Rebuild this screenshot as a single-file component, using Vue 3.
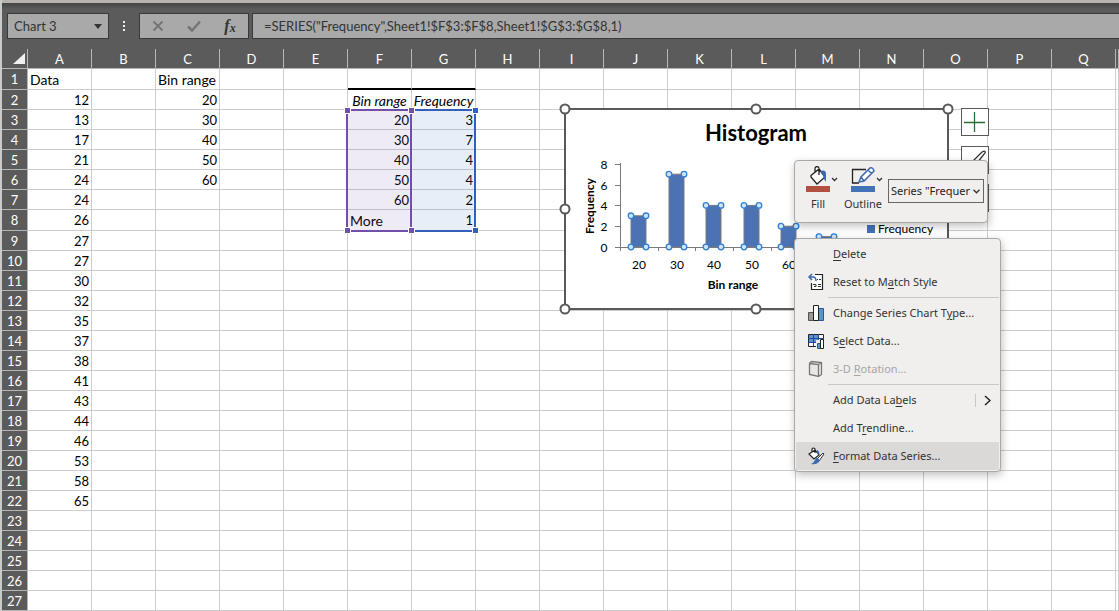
<script setup>
import { ref } from 'vue'

const formula = ref('=SERIES("Frequency",Sheet1!$F$3:$F$8,Sheet1!$G$3:$G$8,1)')
const nameBox = ref('Chart 3')
const columns = 'ABCDEFGHIJKLMNOPQ'.split('')
const data = {
  A: ['Data', 12, 13, 17, 21, 24, 24, 26, 27, 27, 30, 32, 35, 37, 38, 41, 43, 44, 46, 53, 58, 65],
  C: ['Bin range', 20, 30, 40, 50, 60],
  F: ['', 'Bin range', 20, 30, 40, 50, 60, 'More'],
  G: ['', 'Frequency', 3, 7, 4, 4, 2, 1],
}
const rows = Array.from({ length: 27 }, (_, i) => i + 1)
const cell = (c, r) => data[c]?.[r - 1] ?? ''
const cellClass = (c, r) => ({
  text: typeof cell(c, r) === 'string',
  ruled: (c === 'F' || c === 'G') && r === 1,
  heading: (c === 'F' || c === 'G') && r === 2,
})

const base = 144
const unit = 10.4
const bars = [
  { label: '20', value: 3 },
  { label: '30', value: 7 },
  { label: '40', value: 4 },
  { label: '50', value: 4 },
  { label: '60', value: 2 },
  { label: '', value: 1 },
].map((b, i) => ({ ...b, x: 72 + Math.round(i * 37.6), y: base - b.value * unit }))
const yTicks = [0, 2, 4, 6, 8]
const xTicks = Array.from({ length: 7 }, (_, i) => 61 + Math.round(i * 37.7))
const handles = [[6, 6], [197, 6], [389, 6], [6, 106], [389, 106], [6, 206], [197, 206], [389, 206]]

const menu = [
  { parts: ['', 'D', 'elete'] },
  { parts: ['Reset to M', 'a', 'tch Style'], icon: 'reset' },
  { sep: true },
  { parts: ['Change Series Chart T', 'y', 'pe...'], icon: 'chart' },
  { parts: ['S', 'e', 'lect Data...'], icon: 'select' },
  { parts: ['3-D ', 'R', 'otation...'], icon: 'rotate', disabled: true },
  { sep: true },
  { parts: ['Add Data La', 'b', 'els'], more: true },
  { parts: ['Add T', 'r', 'endline...'] },
  { parts: ['', 'F', 'ormat Data Series...'], icon: 'format', active: true },
]
</script>

<template>
  <main class="app">
    <header class="bar">
      <div class="name-box">
        <input v-model="nameBox" aria-label="Name box" />
        <button aria-label="Show names"><svg width="9" height="5"><path d="M0 0h8L4 5z" fill="#333" /></svg></button>
      </div>
      <svg class="grip" width="3" height="12"><path d="M0 0h2v2H0zM0 4h2v2H0zM0 8h2v2H0z" fill="#f0f0f0" /></svg>
      <div class="entry">
        <button aria-label="Cancel"><svg width="12" height="12"><path d="M1.500 1.500l9 9M10.500 1.500l-9 9" stroke="#767676" stroke-width="2" fill="none" /></svg></button>
        <button aria-label="Enter"><svg width="14" height="12"><path d="M1 6.500l4 4L13 1.500" stroke="#767676" stroke-width="2.500" fill="none" /></svg></button>
        <button aria-label="Insert function" class="fx">f<sub>x</sub></button>
      </div>
      <input v-model="formula" class="formula" aria-label="Formula bar" />
    </header>

    <table class="sheet">
      <colgroup>
        <col class="c-head" /><col v-for="c in columns" :key="c" class="c-data" /><col />
      </colgroup>
      <thead>
        <tr>
          <th class="corner"><svg width="12" height="11"><path d="M12 0v11H0z" fill="#f0f0f0" /></svg></th>
          <th v-for="c in columns" :key="c" scope="col">{{ c }}</th>
          <th></th>
        </tr>
      </thead>
      <tbody>
        <tr v-for="r in rows" :key="r" :class="{ tall: r === 1 || r === 8 }">
          <th scope="row">{{ r }}</th>
          <td v-for="c in columns" :key="c" :class="cellClass(c, r)">{{ cell(c, r) }}</td>
          <td></td>
        </tr>
      </tbody>
    </table>

    <svg class="ranges" width="136" height="128">
      <rect x="5" y="5" width="64" height="121" fill="#7048a8" fill-opacity=".11" />
      <rect x="69" y="5" width="64" height="121" fill="#3060c0" fill-opacity=".11" />
      <path d="M69 5h64v121H69" fill="none" stroke="#335fbd" stroke-width="2" />
      <path d="M5 5h64v121H5z" fill="none" stroke="#714fab" stroke-width="2" />
      <g stroke="#fff">
        <path d="M130.500 2.500h6v6h-6zM130.500 122.500h6v6h-6z" fill="#335fbd" />
        <path d="M2.500 2.500h6v6h-6zM2.500 122.500h6v6h-6zM66.500 2.500h6v6h-6zM66.500 122.500h6v6h-6z" fill="#714fab" />
      </g>
    </svg>

    <svg class="chart" width="396" height="214" role="img" aria-label="Histogram">
      <rect x="6" y="6" width="383" height="200" fill="#fff" stroke="#595959" stroke-width="2" />
      <text x="197" y="38" class="title">Histogram</text>
      <path d="M61.500 60V148M56 144.500H288" stroke="#7a7a7a" fill="none" />
      <g class="labels">
        <template v-for="t in yTicks" :key="t">
          <path :d="`M56 ${Math.round(base - t * unit) + 0.5}h5`" stroke="#7a7a7a" />
          <text x="45" :y="Math.round(base - t * unit) + 5">{{ t }}</text>
        </template>
        <path v-for="t in xTicks" :key="t" :d="`M${t + 0.5} 144v4`" stroke="#7a7a7a" />
        <text v-for="b in bars" :key="b.x" :x="b.x + 8" y="166">{{ b.label }}</text>
      </g>
      <text x="174" y="186" class="axis">Bin range</text>
      <text transform="translate(35 103) rotate(-90)" class="axis">Frequency</text>
      <g v-for="b in bars" :key="b.x" :transform="`translate(${b.x} 0)`">
        <rect x="0" :y="b.y" width="15" :height="base - b.y" fill="#4c72b4" stroke="#7b7b7b" />
        <g fill="#cfe4f7" stroke="#2f7fd6" stroke-width="1.300">
          <circle cx="0" :cy="b.y" r="2.800" /><circle cx="15" :cy="b.y" r="2.800" />
          <circle cx="0" :cy="base" r="2.800" /><circle cx="15" :cy="base" r="2.800" />
        </g>
      </g>
      <rect x="308" y="122" width="8" height="8" fill="#4472b8" />
      <text x="319" y="130" class="legend">Frequency</text>
      <circle v-for="(h, i) in handles" :key="i" :cx="h[0]" :cy="h[1]" r="4.500" fill="#fff" stroke="#595959" stroke-width="2" />
    </svg>

    <div class="side">
      <button aria-label="Chart elements"><svg width="22" height="22"><path d="M10.500 1v20M0 11.500h21" stroke="#2b6b35" stroke-width="1.300" /></svg></button>
      <button aria-label="Chart styles"><svg width="22" height="22" fill="none" stroke="#333" stroke-width="1.300"><path d="M8 13L18 3q4-2 3 1l-8 10zM8 13q-4 0-5 7 7 1 9-5" /></svg></button>
      <button aria-label="Chart filters"><svg width="22" height="22"><path d="M3 4h15l-6 7v8l-3-2v-6z" fill="none" stroke="#333" /></svg></button>
    </div>

    <section class="mini" aria-label="Series format">
      <button class="tool fill">
        <svg width="34" height="26">
          <path d="M7 9.500l8-6.500 6 8-8 7-6-7zM11 7V2q2-3 4 0v7" fill="#fff" stroke="#222" stroke-width="1.300" />
          <path d="M16 5q6-2 6 3v8l-2-3-1-4z" fill="#3d67ae" />
          <path d="M2 20h24v6H2z" fill="#b05040" />
          <path d="M28 12l2.500 2.500L33 12" fill="none" stroke="#333" stroke-width="1.300" />
        </svg>
        <span>Fill</span>
      </button>
      <button class="tool outline">
        <svg width="34" height="26">
          <path d="M17 3.500H3.500V17H10" fill="none" stroke="#222" stroke-width="1.300" />
          <path d="M10 16l2-5 9-9q3-1 4 3l-10 10zM12 11l3 4M19 4l4 4" fill="#fff" stroke="#3d67ae" stroke-width="1.500" />
          <path d="M2 20h24v6H2z" fill="#4472b8" />
          <path d="M28 12l2.500 2.500L33 12" fill="none" stroke="#333" stroke-width="1.300" />
        </svg>
        <span>Outline</span>
      </button>
      <div class="picker">
        <select aria-label="Chart element"><option>Series "Frequer</option></select>
        <svg width="7" height="5"><path d="M.500 .800l3 3 3-3" fill="none" stroke="#333" stroke-width="1.300" /></svg>
      </div>
    </section>

    <nav class="menu" aria-label="Series menu">
      <template v-for="(m, i) in menu" :key="i">
        <hr v-if="m.sep" />
        <button v-else :disabled="m.disabled" :class="{ active: m.active }">
          <span class="icon">
            <svg v-if="m.icon === 'reset'" width="16" height="18">
              <path d="M7 1.500h7.500v15h-11V10" fill="#fff" stroke="#222" stroke-width="1.200" />
              <path d="M9 6.500h1M11 6.500h2M5 11.500h3v2H6M10 11.500h3M10 13.500h3" stroke="#333" fill="none" />
              <path d="M4 1L1 4l3 3M1 4h4q3 0 3 4" fill="none" stroke="#3d67ae" stroke-width="1.500" />
            </svg>
            <svg v-else-if="m.icon === 'chart'" width="17" height="18">
              <path d="M.500 8.500h5v8h-5z" fill="#999" stroke="#555" />
              <path d="M10.500 4.500h5v12h-5z" fill="#5b93d0" stroke="#2c57a0" />
              <path d="M5.500 1.500h5v15h-5z" fill="#fff" stroke="#222" />
            </svg>
            <svg v-else-if="m.icon === 'select'" width="17" height="18">
              <path d="M.500 2.500h15v12H.500z" fill="#fff" stroke="#222" />
              <path d="M1 3h9v8H1z" fill="#5b93d0" />
              <path d="M0 6.500h16M0 10.500h9M5.500 2v12M10.500 2v7" stroke="#23489a" fill="none" />
              <path d="M8 8h9v10H8z" fill="#f0efed" />
              <path d="M9.500 11.500h3v5h-3z" fill="#5b93d0" stroke="#2c57a0" /><path d="M12.500 7.500h3v9h-3z" fill="#fff" stroke="#222" />
            </svg>
            <svg v-else-if="m.icon === 'rotate'" width="16" height="18">
              <path d="M1.500 3.500l9 1v12l-9-2zM1.500 3.500l2-2 10 1v12l-3 2M10.500 4.500l3-2" fill="#e8e7e6" stroke="#777" stroke-width="1.300" />
            </svg>
            <svg v-else-if="m.icon === 'format'" width="17" height="18">
              <path d="M1 7l6-4 4 5-5 4zM4 5V2q1-2 3 0v4" fill="#fff" stroke="#222" stroke-width="1.200" />
              <path d="M9 3q3 1 2 5L9 6z" fill="#3d67ae" />
              <path d="M15 6l-6 6 2 2 5-7z" fill="#fff" stroke="#333" />
              <path d="M8 11q4 0 3 4-3 3-8 2 3-1 5-6z" fill="#3d67ae" />
            </svg>
          </span>
          <span class="label">{{ m.parts[0] }}<u>{{ m.parts[1] }}</u>{{ m.parts[2] }}</span>
          <span v-if="m.more" class="more"><svg width="7" height="11"><path d="M1 1l5 4.500L1 10" fill="none" stroke="#222" stroke-width="1.500" /></svg></span>
        </button>
      </template>
    </nav>
  </main>
</template>

<style>
html, body { background: #fff; }
</style>

<style scoped>
* { box-sizing: border-box; }
.app {
  position: relative;
  overflow: hidden;
  min-height: 100vh;
  border-left: 2px solid #c9cbc9;
  font-family: Lato, "Liberation Sans", sans-serif;
  font-size: 13px;
  color: #000;
}
button, input, select { font: inherit; color: inherit; margin: 0; padding: 0; border: 0; background: none; border-radius: 0; }
svg { display: block; }
.bar {
  display: flex;
  align-items: center;
  height: 49px;
  padding: 10px 0 10px 5px;
  border-top: 3px solid #b7b3b0;
  background: linear-gradient(#444, #5b5b5b 6px);
  color: #333;
}
.name-box, .entry, .formula { height: 26px; background: #a9a9a9; border: 1px solid #3a3a3a; }
.name-box { display: flex; align-items: center; width: 102px; padding: 0 5px 0 6px; }
.name-box input { flex: 1; min-width: 0; }
.grip { margin: 2px 13px 0 14px; }
.entry { display: flex; align-items: center; justify-content: space-around; width: 110px; margin-right: 3px; }
.entry button { display: grid; place-items: center; width: 32px; }
.entry .fx { display: block; font: italic bold 16px/20px "Liberation Serif", serif; }
.fx sub { font-size: 12px; line-height: 1px; vertical-align: -1px; }
.formula { flex: 1; min-width: 0; padding: 0 11px; border-right: 0; }
.sheet { width: 100%; table-layout: fixed; border-collapse: separate; border-spacing: 0; }
.c-head { width: 26px; }
.c-data { width: 64px; }
.sheet th, .sheet td {
  height: 20px;
  padding: 2px 2px 0;
  border-right: 1px solid #cdcdcd;
  border-bottom: 1px solid #cdcdcd;
  line-height: 17px;
  vertical-align: top;
  white-space: nowrap;
}
.sheet .tall th, .sheet .tall td { height: 21px; }
.sheet th { padding: 2px 0 0; background: #5b5b5b; color: #fff; font-weight: 400; text-align: center; border-color: #b5b5b5; }
.corner svg { margin: 2px 2px 0 auto; }
.sheet td { text-align: right; }
.sheet td.text { text-align: left; font-size: 14px; }
.sheet td.heading { font-style: italic; text-align: center; padding: 2px 0 0; }
.sheet td.ruled { border-bottom: 2px solid #000; }
.ranges, .chart { position: absolute; overflow: visible; }
.ranges { left: 340px; top: 105px; }
.chart { left: 557px; top: 103px; }
.title { font-size: 22px; font-weight: 700; text-anchor: middle; }
.labels { font-size: 12px; text-anchor: middle; }
.axis { font-size: 12px; font-weight: 700; text-anchor: middle; }
.legend { font-size: 12px; }
.side { position: absolute; left: 959px; top: 108px; display: grid; gap: 10px; }
.side button { display: grid; place-items: center; width: 28px; height: 28px; border: 1px solid #595959; background: #fff; }
.mini, .menu {
  position: absolute;
  left: 792px;
  border: 1px solid #a8a8a8;
  border-radius: 4px;
  background: #f0efed;
  box-shadow: 1px 3px 8px rgba(0, 0, 0, .25);
  font-family: "Noto Sans", "Open Sans", sans-serif;
  font-size: 11px;
  color: #333;
}
.mini { top: 160px; width: 194px; height: 63px; display: flex; align-items: flex-start; padding: 5px 3px 0 9px; }
.tool { display: grid; gap: 4px; justify-items: start; line-height: 16px; }
.tool span { width: 28px; display: flex; justify-content: center; }
.fill { width: 45px; }
.outline { width: 36px; }
.picker { position: relative; margin: 13px 0 0 auto; }
.picker select { display: block; appearance: none; width: 96px; height: 24px; padding: 0 12px 2px 2px; border: 1px solid #666; color: #222; }
.picker svg { position: absolute; right: 4px; top: 10px; pointer-events: none; }
.menu { top: 238px; width: 207px; padding: 1px; }
.menu hr { height: 1px; margin: 1px 0 1px 32px; border: 0; background: #c8c8c8; }
.menu button { display: flex; align-items: center; width: 100%; height: 28px; text-align: left; }
.menu .active { background: #dad9d7; }
.menu button:disabled { color: #a5a5a5; }
.icon { width: 37px; padding-left: 12px; }
.label { flex: 1; padding-bottom: 2px; white-space: nowrap; }
.label u { text-underline-offset: 2px; }
.more { padding: 1px 8px 1px 8px; border-left: 1px solid #c8c8c8; }
</style>
